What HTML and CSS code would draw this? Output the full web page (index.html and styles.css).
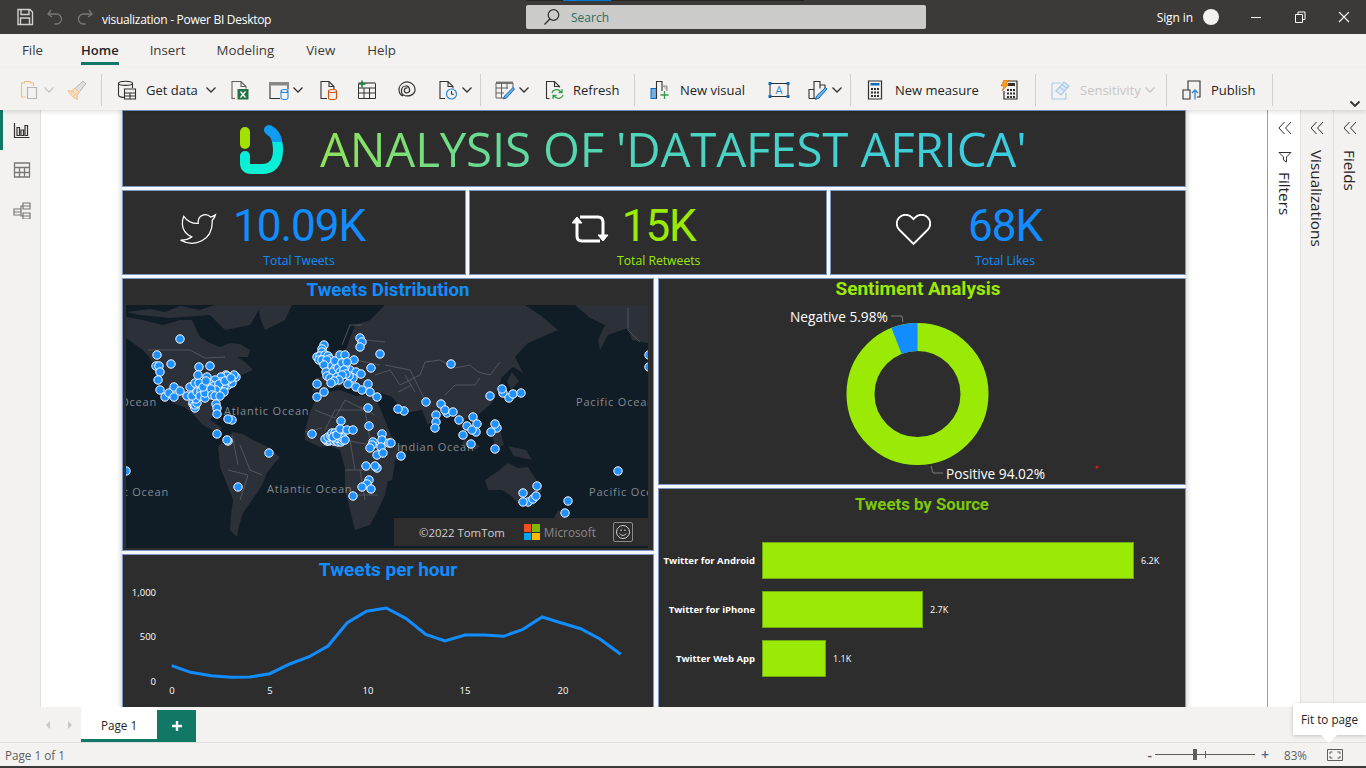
FILE: index.html
```html
<!DOCTYPE html>
<html lang="en">
<head>
    <meta charset="UTF-8">
    <meta name="viewport" content="width=device-width, initial-scale=1.0">
    <title>visualization - Power BI Desktop</title>
    <link rel="stylesheet" href="styles.css">
</head>
<body>
    <!-- Title bar -->
    <header class="titlebar">
        <div class="quick-access">
            <svg class="qa-icon" viewBox="0 0 18 18"><path d="M2 1.500h12l2.500 2.500v12.500h-14.500z M5 1.500v5h8v-5 M4.500 16.500v-6.500h9v6.500" fill="none" stroke="#d2d0ce" stroke-width="1.400"/></svg>
            <svg class="qa-icon" viewBox="0 0 18 18"><path d="M5 2 2 6l4 3 M2.500 6h8a5 5 0 0 1 0 10h-2" fill="none" stroke="#797775" stroke-width="1.300"/></svg>
            <svg class="qa-icon" viewBox="0 0 18 18"><path d="M13 2l3 4-4 3 M15.500 6h-8a5 5 0 0 0 0 10h2" fill="none" stroke="#797775" stroke-width="1.300"/></svg>
        </div>
        <span class="doc-title">visualization - Power BI Desktop</span>
        <div class="search-progress"><span></span></div>
        <div class="search-box">
            <svg class="search-icon" viewBox="0 0 18 18"><circle cx="10.500" cy="7" r="5.300" fill="none" stroke="#323130" stroke-width="1.200"/><path d="M6.800 11 1.500 16.500" stroke="#323130" stroke-width="1.300"/></svg>
            <span>Search</span>
        </div>
        <div class="window-right">
            <span class="sign-in">Sign in</span>
            <span class="avatar"></span>
            <svg class="win-btn" viewBox="0 0 44 16"><path d="M17 8.500h10" stroke="#fff"/></svg>
            <svg class="win-btn" viewBox="0 0 44 16"><path d="M17.500 5.500h7v8h-7z M20 5.500v-2.500h7v7.500h-2.500" fill="none" stroke="#fff"/></svg>
            <svg class="win-btn" viewBox="0 0 44 16"><path d="M17 3l10 10 M27 3 17 13" stroke="#fff" stroke-width="1.100"/></svg>
        </div>
    </header>

    <!-- Menu tabs -->
    <nav class="menu-tabs">
        <span class="menu-tab first">File</span>
        <span class="menu-tab active">Home</span>
        <span class="menu-tab">Insert</span>
        <span class="menu-tab">Modeling</span>
        <span class="menu-tab view-tab">View</span>
        <span class="menu-tab">Help</span>
    </nav>

    <!-- Ribbon -->
    <div class="ribbon">
        <div class="rb-item">
            <svg class="rb-icon" viewBox="0 0 20 20"><path d="M5.500 17h-4v-14h3v-1.500h6v1.500h3v3" fill="none" stroke="#f0bf8e" stroke-width="1.200"/><path d="M7.500 7.500h9v11h-9z" fill="none" stroke="#b8b6b4" stroke-width="1.200"/></svg>
            <svg class="chev dim" viewBox="0 0 12 8"><path d="M1.500 1.500 6 6l4.500-4.500"/></svg>
        </div>
        <div class="rb-item">
            <svg class="rb-icon" viewBox="0 0 20 20"><path d="M1 10.500c3 1 5 0 7-2.500l4.500 4.500c-2 2-3 4.500-2 7-3-.5-7.500-4.500-9.500-9z M4 13l3-1.500 M6.500 16l3-2.500" fill="#f8dcc0" stroke="#f0bf8e"/><path d="M8.500 8 13 4l3-3 3 3-3 3-3 4.500" fill="#e1dfdd" stroke="#b8b6b4"/></svg>
        </div>
        <div class="rb-sep"></div>
        <div class="rb-item">
            <svg class="rb-icon" viewBox="0 0 20 20"><path d="M8 17.500c-3.500 0-6.500-.800-6.500-2.500v-11.500c0-3 14-3 14 0v4.500 M1.500 3.500c0 2.500 14 2.500 14 0" fill="none" stroke="#323130" stroke-width="1.100"/><path d="M7.500 9h11v10h-11z M7.500 13h11 M7.500 16h11 M13 13v6" fill="#f3f2f1" stroke="#323130" stroke-width="1.100"/></svg>
            <span class="rb-label label-getdata">Get data</span>
            <svg class="chev" viewBox="0 0 12 8"><path d="M1.500 1.500 6 6l4.500-4.500"/></svg>
        </div>
        <div class="rb-item">
            <svg class="rb-icon" viewBox="0 0 20 20"><path d="M5 18.500h-3v-17h9l5 5v2 M11 1.500v5h5" fill="none" stroke="#605e5c" stroke-width="1.100"/><rect x="7.500" y="9" width="11" height="10.500" fill="#217346"/><path d="M10.500 11.500l5 6 M15.500 11.500l-5 6" stroke="#fff" stroke-width="1.300"/></svg>
        </div>
        <div class="rb-item">
            <svg class="rb-icon" viewBox="0 0 20 20"><path d="M11 18.500h-10v-16h18v7" fill="none" stroke="#323130" stroke-width="1.100"/><rect x="1" y="2" width="18" height="3.500" fill="#8a8886"/><path d="M12 11c0-2 7-2 7 0v7c0 2-7 2-7 0z M12 11c0 2 7 2 7 0" fill="#f3f2f1" stroke="#2b88d8" stroke-width="1.100"/></svg>
            <svg class="chev" viewBox="0 0 12 8"><path d="M1.500 1.500 6 6l4.500-4.500"/></svg>
        </div>
        <div class="rb-item">
            <svg class="rb-icon" viewBox="0 0 20 20"><path d="M8 18.500h-6v-17h8l5 5v3 M10 1.500v5h5" fill="none" stroke="#323130" stroke-width="1.100"/><path d="M9.500 11c0-2 8-2 8 0v7c0 2-8 2-8 0z M9.500 11c0 2 8 2 8 0" fill="#f3f2f1" stroke="#ca5010" stroke-width="1.100"/></svg>
        </div>
        <div class="rb-item">
            <svg class="rb-icon" viewBox="0 0 20 20"><path d="M1.500 3.500h17v15h-17z M1.500 8h17 M1.500 13h17 M7 8v10.500 M12.500 8v10.500" fill="none" stroke="#323130" stroke-width="1"/><rect x="1.500" y="2" width="17" height="2" fill="#8a8886"/><path d="M5 0.500v7 M1.500 4h7" stroke="#107c41" stroke-width="1.500"/></svg>
        </div>
        <div class="rb-item">
            <svg class="rb-icon" viewBox="0 0 20 20"><path d="M10.500 8a2.500 2.500 0 1 0 .5 4.500c3-1 1.500-7-2.500-6.500-5 .5-5.500 8-1 9.500 5 1.500 11-1 10.500-6.500-.5-6-7-8-11-6.500-3.500 1.500-5 5-5 7 0 3 1.500 5.500 4 6.500" fill="none" stroke="#323130" stroke-width="1.200"/></svg>
        </div>
        <div class="rb-item">
            <svg class="rb-icon" viewBox="0 0 20 20"><path d="M7 18.500h-5v-17h8l5 5v2 M10 1.500v5h5" fill="none" stroke="#323130" stroke-width="1.100"/><circle cx="13.500" cy="14" r="5" fill="#f3f2f1" stroke="#2b88d8" stroke-width="1.200"/><path d="M13.500 11v3.200h2.500" fill="none" stroke="#323130"/></svg>
            <svg class="chev" viewBox="0 0 12 8"><path d="M1.500 1.500 6 6l4.500-4.500"/></svg>
        </div>
        <div class="rb-sep"></div>
        <div class="rb-item">
            <svg class="rb-icon" viewBox="0 0 20 20"><rect x="1" y="1.500" width="17" height="2.500" fill="#8a8886"/><path d="M1 3h17v5 M1 3v15h8 M1 8h12 M1 13h8 M6.500 3v15 M12 3v6" fill="none" stroke="#605e5c"/><path d="M18 7.500l1.500 1.500-8 9-3 1 1-3z" fill="#71afe5" stroke="#0f6cbd"/></svg>
            <svg class="chev" viewBox="0 0 12 8"><path d="M1.500 1.500 6 6l4.500-4.500"/></svg>
        </div>
        <div class="rb-item">
            <svg class="rb-icon" viewBox="0 0 20 20"><path d="M4.500 18.500h-3v-17h8l5 5v1 M9.500 1.500v5h5" fill="none" stroke="#323130" stroke-width="1.100"/><path d="M7 13c.5-3 5-4.500 8-2l1.500 1 M17 9v3.500h-3.500 M18 15c-.5 3-5 4.500-8 2l-1.500-1 M8 19v-3.500h3.500" fill="none" stroke="#3a9a4c" stroke-width="1.300"/></svg>
            <span class="rb-label">Refresh</span>
        </div>
        <div class="rb-sep"></div>
        <div class="rb-item">
            <svg class="rb-icon" viewBox="0 0 20 20"><rect x="1" y="8.500" width="5.500" height="10" fill="#71afe5" stroke="#0f6cbd"/><path d="M6.500 18.500v-17h5.500v9.500" fill="none" stroke="#323130" stroke-width="1.100"/><path d="M12 6h5v5" fill="#c8c6c4" stroke="#8a8886"/><path d="M14.500 11v8 M10.500 15h8" stroke="#3a9a4c" stroke-width="1.300"/></svg>
            <span class="rb-label label-visual">New visual</span>
        </div>
        <div class="rb-item">
            <svg class="rb-icon wide" viewBox="0 0 22 20"><path d="M2 3.500h18v13h-18z" fill="none" stroke="#323130"/><path d="M0.500 2h3v3h-3z M18.500 2h3v3h-3z M0.500 15h3v3h-3z M18.500 15h3v3h-3z" fill="#0f6cbd"/><text class="textbox-a" x="11" y="14">A</text></svg>
        </div>
        <div class="rb-item">
            <svg class="rb-icon" viewBox="0 0 20 20"><path d="M1 18.500v-9h5v-8h6v7 M1 18.500h5v-9 M6 18.500h3 M12 5h5v3" fill="none" stroke="#323130" stroke-width="1.100"/><path d="M17.500 7.500l1.500 1.500-8 9-3.500 1.500 1-3.500z" fill="#71afe5" stroke="#0f6cbd"/></svg>
            <svg class="chev" viewBox="0 0 12 8"><path d="M1.500 1.500 6 6l4.500-4.500"/></svg>
        </div>
        <div class="rb-sep"></div>
        <div class="rb-item">
            <svg class="rb-icon" viewBox="0 0 20 20"><path d="M3.500 1h13v18h-13z" fill="none" stroke="#323130" stroke-width="1.200"/><rect x="5.500" y="3" width="9" height="2.500" fill="#0f6cbd"/><path d="M6 8h2v2h-2z M9 8h2v2h-2z M12 8h2v2h-2z M6 11.500h2v2h-2z M9 11.500h2v2h-2z M12 11.500h2v2h-2z M6 15h2v2h-2z M9 15h2v2h-2z M12 15h2v2h-2z" fill="#323130"/></svg>
            <span class="rb-label label-measure">New measure</span>
        </div>
        <div class="rb-item">
            <svg class="rb-icon" viewBox="0 0 20 20"><path d="M6 1h12v18h-13v-8" fill="none" stroke="#323130" stroke-width="1.200"/><path d="M8 9h2v2h-2z M11 9h2v2h-2z M14 9h2v2h-2z M8 12.500h2v2h-2z M11 12.500h2v2h-2z M14 12.500h2v2h-2z M8 16h2v2h-2z M11 16h2v2h-2z M14 16h2v2h-2z M9 3h7v3h-7z" fill="#323130"/><path d="M5 0h5l-3 4h3l-7 7 2-5h-3z" fill="#f7a11a" stroke="#ca5010" stroke-width=".5"/></svg>
        </div>
        <div class="rb-sep"></div>
        <div class="rb-item">
            <svg class="rb-icon" viewBox="0 0 20 20"><path d="M1 3h9 M1 3v16h14v-6" fill="none" stroke="#a9cbe6" stroke-width="1.200"/><path d="M5 11l8-9 5 4-8 9z M8.500 7l5 4 M11 4.500l5 4" fill="#deecf9" stroke="#a9cbe6" stroke-width="1.200"/></svg>
            <span class="rb-label disabled label-sens">Sensitivity</span>
            <svg class="chev dim" viewBox="0 0 12 8"><path d="M1.500 1.500 6 6l4.500-4.500"/></svg>
        </div>
        <div class="rb-sep"></div>
        <div class="rb-item">
            <svg class="rb-icon" viewBox="0 0 20 20"><path d="M1 10h7v9h-7z M6 10v-9h12v16h-3" fill="none" stroke="#323130" stroke-width="1.100"/><path d="M13 19.500v-9 M10 13l3-3 3 3" fill="none" stroke="#2b88d8" stroke-width="1.300"/></svg>
            <span class="rb-label label-publish">Publish</span>
        </div>
        <div class="rb-sep"></div>
        <svg class="ribbon-collapse" viewBox="0 0 12 8"><path d="M1.500 1.500 6 6l4.500-4.500"/></svg>
    </div>

    <div class="workspace">
        <!-- View switcher -->
        <aside class="view-rail">
            <div class="view-btn active">
                <svg viewBox="0 0 18 18"><path d="M1.500 2v14.500h15" fill="none" stroke="#323130" stroke-width="1.200"/><path d="M4 6.500h2.500v8h-2.500z M8 9h2.500v5.500h-2.500z M12 4.500h2.500v10h-2.500z" fill="none" stroke="#323130" stroke-width="1.200"/></svg>
            </div>
            <div class="view-btn">
                <svg viewBox="0 0 18 18"><path d="M1.500 2h15v14h-15z M1.500 6.500h15 M1.500 11.500h15 M6.500 6.500v9.500 M11.500 6.500v9.500" fill="none" stroke="#797775" stroke-width="1.300"/></svg>
            </div>
            <div class="view-btn">
                <svg viewBox="0 0 18 18"><path d="M1 8h7v6h-7z M1 11h7 M10 2h7v6h-7z M10 5h7 M10 12h7v6h-7z M10 15h7 M8 9.500V5h2 M8 12.500V15h2" fill="none" stroke="#797775" stroke-width="1.200"/></svg>
            </div>
        </aside>

        <!-- Report canvas -->
        <main class="canvas">
            <div class="report">
                <section class="panel banner">
                    <svg class="logo" viewBox="238 121 48 52">
                        <defs>
                            <linearGradient id="logo-grad" x1="0" y1="0" x2="0" y2="1">
                                <stop offset="0.320" stop-color="#0f9bf2"/>
                                <stop offset="0.320" stop-color="#05eadf"/>
                                <stop offset="1" stop-color="#0cf0d4"/>
                            </linearGradient>
                        </defs>
                        <rect x="240" y="125" width="10" height="22" rx="5" fill="#a4e100"/>
                        <path d="M269 128c6 3 9 10 9 20 0 13-6 19-16 19h-11q-6 0-6-6v-7" fill="none" stroke="url(#logo-grad)" stroke-width="10" stroke-linecap="round"/>
                    </svg>
                    <h1 class="banner-title">ANALYSIS OF 'DATAFEST AFRICA'</h1>
                </section>

                <div class="kpi-row">
                    <section class="panel kpi kpi-tweets">
                        <svg class="kpi-icon bird" viewBox="0 0 24 24"><path d="M23 3a10.900 10.900 0 0 1-3 1.480 4.480 4.480 0 0 0-7.860 3v1A10.660 10.660 0 0 1 3 4s-4 9 5 13a11.640 11.640 0 0 1-7 2c9 5 20 0 20-11.500a4.500 4.500 0 0 0-.08-.83A7.720 7.720 0 0 0 23 3z" fill="none" stroke="#fff" stroke-width=".8"/></svg>
                        <div class="kpi-text blue">
                            <div class="kpi-value">10.09K</div>
                            <div class="kpi-label">Total Tweets</div>
                        </div>
                    </section>
                    <section class="panel kpi kpi-retweets">
                        <svg class="kpi-icon swap" viewBox="0 0 38 30"><path d="M6 6v16q0 5 5 5h18 M32 24V8q0-5-5-5H9" fill="none" stroke="#fff" stroke-width="3"/><path d="M1 9l5-6 5 6z M27 21l5 6 5-6z" fill="#fff" stroke="#fff"/></svg>
                        <div class="kpi-text green">
                            <div class="kpi-value">15K</div>
                            <div class="kpi-label">Total Retweets</div>
                        </div>
                    </section>
                    <section class="panel kpi kpi-likes">
                        <svg class="kpi-icon heart" viewBox="1.500 2.500 21 20"><path d="M20.840 4.610a5.500 5.500 0 0 0-7.780 0L12 5.670l-1.060-1.060a5.500 5.500 0 0 0-7.780 7.780l1.060 1.060L12 21.230l7.780-7.780 1.060-1.060a5.500 5.500 0 0 0 0-7.780z" fill="none" stroke="#fff" stroke-width="1.200"/></svg>
                        <div class="kpi-text blue">
                            <div class="kpi-value">68K</div>
                            <div class="kpi-label">Total Likes</div>
                        </div>
                    </section>
                </div>

                <div class="chart-cols">
                    <div class="chart-col">
                        <section class="panel map-panel">
                            <h2 class="chart-title blue map-title">Tweets Distribution</h2>
                            <div class="map">
                                <svg class="map-svg" viewBox="126 305 522 243">
                                    <g class="land">
                                        <path d="M126 338 143 350 150 358 155 370 157 382 160 390 173 403 184 407 192 413 203 425 217 433 222 428 210 420 215 413 217 403 210 400 220 400 233 387 235 378 244 374 253 370 245 362 237 357 248 357 250 350 240 344 230 343 220 347 208 342 200 337 192 320 180 320 163 325 143 320 126 317z"/>
                                        <path d="M126 312 150 309 165 312 180 306 200 310 215 305H262L250 325 225 330 210 315 170 318 140 315z"/>
                                        <path d="M258 305H292L285 320 265 330 260 318z"/>
                                        <path d="M218 447 225 438 233 432 243 434 253 440 268 447 280 457 273 465 267 473 262 485 257 493 250 503 243 513 239 526 237 537 230 530 231 515 233 500 226 482 220 467z"/>
                                        <path d="M305 430 310 412 317 397 328 392 340 390 356 396 373 395 380 408 385 420 395 445 405 445 397 458 390 470 385 495 378 510 370 525 355 530 350 510 345 490 345 468 340 450 330 446 320 447 305 440z"/>
                                        <path d="M385 305H525L540 315 558 330 542 337 528 343 515 357 523 373 513 367 502 377 497 392 492 403 478 415 472 413 465 420 475 433 462 423 452 415 438 412 428 425 422 410 405 413 392 397 373 390 345 385 320 390 312 392 316 378 330 375 325 362 335 350 345 352 350 338 355 325 370 320z"/>
                                        <path d="M485 480 497 472 508 463 518 468 528 467 535 478 542 490 538 500 532 507 518 503 510 495 502 490 488 490z"/>
                                        <path d="M575 305H648V343L632 340 628 328 608 335 600 350 598 340 605 325 590 318z"/>
                                        <path d="M465 438 480 446 476 450 462 444z M492 436 500 430 504 445 496 448z M508 446 526 450 532 460 514 456z M388 468 395 463 392 480 386 482z M507 381 512 372 519 381 511 390z M558 510 566 516 556 526 552 522z M324 350 330 346 328 358 322 358z"/>
                                    </g>
                                    <g class="borders">
                                        <path d="M148 350H190L205 358 225 357 M172 395 190 397 200 410 M342 345 350 325 362 325 M365 340 385 342 M330 378 355 360 380 365 M375 375 390 370 400 385 420 375 425 362 440 360 455 368 470 365 478 372 490 375 500 362 M425 400 410 370 385 365 M445 395 455 385 475 385 480 378 M325 430 335 410 365 410 M365 410 370 440 385 455 M345 440 370 445 M345 470 380 470 M350 495 378 495 M240 445 250 470 262 475 M228 470 248 475 240 500 M232 435 238 465 M628 308V330L640 342 M315 410 335 418 345 400 M345 400 375 415 M305 432 322 428 M350 440 355 470 M360 470 365 500 M405 375 415 392 M398 392 412 385"/>
                                    </g>
                                    <g class="map-labels">
                                        <text x="157" y="406" text-anchor="end">Ocean</text>
                                        <text x="224" y="415">Atlantic Ocean</text>
                                        <text x="169" y="496" text-anchor="end">Pacific Ocean</text>
                                        <text x="267" y="493">Atlantic Ocean</text>
                                        <text x="397" y="451">Indian Ocean</text>
                                        <text x="576" y="406">Pacific Ocean</text>
                                        <text x="589" y="496">Pacific Ocean</text>
                                    </g>
                                    <g class="pins">
                                        <circle cx="180" cy="339"/><circle cx="157" cy="355"/><circle cx="156" cy="366"/><circle cx="159" cy="366"/><circle cx="160" cy="372"/><circle cx="171" cy="364"/><circle cx="158" cy="380"/><circle cx="160" cy="390"/><circle cx="165" cy="397"/><circle cx="169" cy="393"/><circle cx="174" cy="387"/><circle cx="174" cy="397"/><circle cx="180" cy="391"/><circle cx="187" cy="396"/><circle cx="190" cy="387"/><circle cx="195" cy="383"/><circle cx="199" cy="383"/><circle cx="199" cy="367"/><circle cx="198" cy="375"/><circle cx="210" cy="366"/><circle cx="207" cy="377"/>
                                        <circle cx="193" cy="404"/><circle cx="195" cy="408"/><circle cx="193" cy="402"/><circle cx="195" cy="405"/><circle cx="197" cy="403"/><circle cx="196" cy="399"/><circle cx="192" cy="396"/><circle cx="197" cy="392"/><circle cx="201" cy="391"/><circle cx="200" cy="396"/><circle cx="205" cy="398"/><circle cx="208" cy="390"/><circle cx="205" cy="393"/><circle cx="212" cy="394"/><circle cx="222" cy="389"/><circle cx="218" cy="392"/><circle cx="228" cy="385"/><circle cx="224" cy="386"/><circle cx="232" cy="383"/><circle cx="228" cy="380"/><circle cx="236" cy="377"/><circle cx="234" cy="375"/><circle cx="226" cy="375"/><circle cx="227" cy="376"/><circle cx="221" cy="377"/><circle cx="221" cy="382"/><circle cx="215" cy="380"/><circle cx="210" cy="384"/><circle cx="203" cy="387"/><circle cx="206" cy="381"/><circle cx="218" cy="387"/><circle cx="214" cy="386"/><circle cx="219" cy="384"/><circle cx="225" cy="381"/><circle cx="231" cy="378"/><circle cx="216" cy="390"/><circle cx="211" cy="389"/><circle cx="224" cy="392"/><circle cx="212" cy="395"/><circle cx="215" cy="396"/><circle cx="220" cy="396"/><circle cx="216" cy="404"/><circle cx="217" cy="408"/><circle cx="217" cy="414"/><circle cx="232" cy="420"/><circle cx="228" cy="419"/><circle cx="217" cy="434"/><circle cx="228" cy="441"/><circle cx="227" cy="440"/><circle cx="269" cy="453"/><circle cx="238" cy="487"/><circle cx="126" cy="471"/>
                                        <circle cx="324" cy="345"/><circle cx="322" cy="349"/><circle cx="322" cy="352"/><circle cx="317" cy="357"/><circle cx="320" cy="356"/><circle cx="325" cy="355"/><circle cx="319" cy="360"/><circle cx="322" cy="360"/><circle cx="328" cy="356"/><circle cx="330" cy="359"/><circle cx="327" cy="360"/><circle cx="324" cy="365"/><circle cx="332" cy="366"/><circle cx="335" cy="369"/><circle cx="335" cy="361"/><circle cx="340" cy="355"/><circle cx="345" cy="355"/><circle cx="354" cy="360"/><circle cx="360" cy="338"/><circle cx="362" cy="342"/><circle cx="360" cy="347"/><circle cx="380" cy="354"/><circle cx="371" cy="368"/><circle cx="326" cy="372"/><circle cx="350" cy="370"/><circle cx="345" cy="367"/><circle cx="356" cy="372"/><circle cx="361" cy="374"/><circle cx="353" cy="378"/><circle cx="349" cy="376"/><circle cx="333" cy="372"/><circle cx="338" cy="368"/><circle cx="342" cy="363"/><circle cx="347" cy="362"/><circle cx="340" cy="372"/><circle cx="344" cy="370"/><circle cx="346" cy="374"/><circle cx="327" cy="376"/><circle cx="330" cy="378"/><circle cx="337" cy="377"/><circle cx="342" cy="375"/><circle cx="339" cy="380"/><circle cx="334" cy="381"/><circle cx="331" cy="383"/><circle cx="317" cy="384"/><circle cx="324" cy="392"/><circle cx="317" cy="397"/><circle cx="348" cy="384"/><circle cx="356" cy="387"/><circle cx="362" cy="390"/><circle cx="368" cy="384"/><circle cx="370" cy="392"/><circle cx="377" cy="397"/><circle cx="368" cy="408"/><circle cx="369" cy="426"/>
                                        <circle cx="312" cy="434"/><circle cx="341" cy="421"/><circle cx="327" cy="441"/><circle cx="329" cy="441"/><circle cx="325" cy="439"/><circle cx="330" cy="440"/><circle cx="334" cy="441"/><circle cx="336" cy="440"/><circle cx="338" cy="442"/><circle cx="341" cy="442"/><circle cx="328" cy="437"/><circle cx="331" cy="436"/><circle cx="332" cy="433"/><circle cx="335" cy="433"/><circle cx="335" cy="436"/><circle cx="337" cy="438"/><circle cx="339" cy="436"/><circle cx="340" cy="437"/><circle cx="342" cy="440"/><circle cx="343" cy="438"/><circle cx="333" cy="437"/><circle cx="337" cy="435"/><circle cx="345" cy="440"/><circle cx="340" cy="429"/><circle cx="347" cy="430"/><circle cx="353" cy="430"/>
                                        <circle cx="382" cy="434"/><circle cx="382" cy="440"/><circle cx="373" cy="442"/><circle cx="372" cy="445"/><circle cx="370" cy="448"/><circle cx="381" cy="447"/><circle cx="377" cy="455"/><circle cx="383" cy="453"/><circle cx="389" cy="443"/><circle cx="366" cy="466"/><circle cx="377" cy="468"/><circle cx="375" cy="466"/><circle cx="369" cy="480"/><circle cx="367" cy="484"/><circle cx="362" cy="487"/><circle cx="371" cy="489"/><circle cx="353" cy="496"/>
                                        <circle cx="451" cy="364"/><circle cx="490" cy="396"/><circle cx="503" cy="393"/><circle cx="502" cy="389"/><circle cx="509" cy="398"/><circle cx="513" cy="394"/><circle cx="521" cy="393"/><circle cx="426" cy="402"/><circle cx="404" cy="411"/><circle cx="398" cy="409"/><circle cx="441" cy="404"/><circle cx="447" cy="413"/><circle cx="445" cy="410"/><circle cx="453" cy="412"/><circle cx="436" cy="415"/><circle cx="436" cy="422"/><circle cx="435" cy="428"/><circle cx="459" cy="420"/><circle cx="467" cy="426"/><circle cx="473" cy="417"/><circle cx="477" cy="424"/><circle cx="476" cy="432"/><circle cx="472" cy="430"/><circle cx="463" cy="435"/><circle cx="471" cy="444"/><circle cx="497" cy="428"/><circle cx="495" cy="424"/><circle cx="491" cy="432"/><circle cx="495" cy="449"/><circle cx="391" cy="443"/><circle cx="401" cy="456"/><circle cx="618" cy="471"/><circle cx="537" cy="486"/><circle cx="523" cy="493"/><circle cx="528" cy="502"/><circle cx="523" cy="502"/><circle cx="533" cy="499"/><circle cx="536" cy="496"/><circle cx="568" cy="501"/><circle cx="565" cy="513"/><circle cx="649" cy="355"/><circle cx="649" cy="367"/>
                                    </g>
                                </svg>
                                <div class="map-credit">
                                    <span class="tomtom">©2022 TomTom</span>
                                    <span class="ms-logo"><i class="ms-r"></i><i class="ms-g"></i><i class="ms-b"></i><i class="ms-y"></i></span>
                                    <span class="ms-name">Microsoft</span>
                                    <span class="smiley">
                                        <svg viewBox="0 0 16 16"><circle cx="8" cy="8" r="6.500" fill="none" stroke="#d0d0d0"/><path d="M4.800 9.500c1.500 2.500 5 2.500 6.400 0" fill="none" stroke="#d0d0d0"/><path d="M5.500 5.500h1.200v1.500h-1.200z M9.300 5.500h1.200v1.500h-1.200z" fill="#d0d0d0"/></svg>
                                    </span>
                                </div>
                            </div>
                        </section>
                        <section class="panel hour-panel">
                            <h2 class="chart-title blue tall">Tweets per hour</h2>
                            <svg class="hour-svg" viewBox="123 585 531 122">
                                <g class="axis-text">
                                    <text x="156" y="596" text-anchor="end">1,000</text>
                                    <text x="156" y="640" text-anchor="end">500</text>
                                    <text x="156" y="685" text-anchor="end">0</text>
                                    <text x="172" y="694" text-anchor="middle">0</text>
                                    <text x="270" y="694" text-anchor="middle">5</text>
                                    <text x="368" y="694" text-anchor="middle">10</text>
                                    <text x="465" y="694" text-anchor="middle">15</text>
                                    <text x="563" y="694" text-anchor="middle">20</text>
                                </g>
                                <polyline class="hour-line" points="171.700,665.700 190.600,672.300 211.300,675.700 230.900,677.300 250.200,677 269.800,673.700 289.800,664 308.700,657 328,646 347.300,622.700 366.600,611.300 386.200,608 405.800,618.300 425.800,634.300 445,641 465,635 484.300,635 503.600,636.300 522.900,629.300 542.200,617 561.500,623 580.700,628.700 600,639 620.700,654.300"/>
                            </svg>
                        </section>
                    </div>
                    <div class="chart-col">
                        <section class="panel sentiment-panel">
                            <h2 class="chart-title green sentiment-title">Sentiment Analysis</h2>
                            <svg class="donut-svg" viewBox="659 299 526 185">
                                <circle class="donut-base" cx="917.500" cy="394" r="57"/>
                                <circle class="donut-neg" cx="917.500" cy="394" r="57" pathLength="100" transform="rotate(-111.500 917.500 394)"/>
                                <path class="leader" d="M891 316h11l1 6 M931 466l2 7h10"/>
                                <text class="donut-label" x="790" y="322">Negative 5.98%</text>
                                <text class="donut-label" x="946" y="479">Positive 94.02%</text>
                                <circle cx="1097" cy="467" r="1.500" fill="#e81123"/>
                            </svg>
                        </section>
                        <section class="panel source-panel">
                            <h2 class="chart-title lime source-title">Tweets by Source</h2>
                            <div class="bars">
                                <div class="bar-row"><span class="bar-name">Twitter for Android</span><span class="bar" style="width:372px"></span><span class="bar-val">6.2K</span></div>
                                <div class="bar-row"><span class="bar-name">Twitter for iPhone</span><span class="bar" style="width:161px"></span><span class="bar-val">2.7K</span></div>
                                <div class="bar-row"><span class="bar-name">Twitter Web App</span><span class="bar" style="width:64px"></span><span class="bar-val">1.1K</span></div>
                            </div>
                        </section>
                    </div>
                </div>
            </div>
        </main>

        <!-- Collapsed panes -->
        <aside class="pane pane-filters">
            <svg class="pane-chev" viewBox="0 0 14 14"><path d="M6.500 1 1 7l5.500 6 M13 1 7.500 7l5.500 6"/></svg>
            <svg class="filter-icon" viewBox="0 0 14 14"><path d="M1 1.500h12l-4.500 4.500v5l-3-2v-3z" fill="none" stroke="#323130"/></svg>
            <span class="pane-name">Filters</span>
        </aside>
        <aside class="pane">
            <svg class="pane-chev" viewBox="0 0 14 14"><path d="M6.500 1 1 7l5.500 6 M13 1 7.500 7l5.500 6"/></svg>
            <span class="pane-name spaced">Visualizations</span>
        </aside>
        <aside class="pane">
            <svg class="pane-chev" viewBox="0 0 14 14"><path d="M6.500 1 1 7l5.500 6 M13 1 7.500 7l5.500 6"/></svg>
            <span class="pane-name spaced">Fields</span>
        </aside>
    </div>

    <!-- Page tabs -->
    <div class="page-bar">
        <div class="page-nav">
            <svg viewBox="0 0 6 10"><path d="M5 1 1 5l4 4z"/></svg>
            <svg viewBox="0 0 6 10"><path d="M1 1l4 4-4 4z"/></svg>
        </div>
        <div class="page-tab">Page 1</div>
        <div class="page-add">
            <svg viewBox="0 0 12 12"><path d="M6 1v10 M1 6h10" stroke="#fff" stroke-width="2.400"/></svg>
        </div>
    </div>

    <footer class="status-bar">
        <span class="page-count">Page 1 of 1</span>
        <div class="zoom-tools">
            <span class="zoom-sign">-</span>
            <div class="zoom-track"><span class="zoom-tick"></span><span class="zoom-thumb"></span></div>
            <span class="zoom-sign plus">+</span>
            <span class="zoom-pct">83%</span>
            <svg class="fit-icon" viewBox="0 0 16 12"><path d="M.5.500h15v11h-15z" fill="none" stroke="#605e5c"/><path d="M3 5V3h2.500 M10.500 3H13v2 M3 7v2h2.500 M10.500 9H13V7" fill="none" stroke="#605e5c"/></svg>
        </div>
    </footer>
    <div class="bottom-edge"></div>

    <div class="tooltip">Fit to page</div>
</body>
</html>
```
FILE: styles.css
```css
* {
    box-sizing: border-box;
}
html, body {
    margin: 0;
    height: 768px;
    overflow: hidden;
}
body {
    position: relative;
    display: flex;
    flex-direction: column;
    font-family: "Open Sans", "Noto Sans", sans-serif;
    color: #252423;
    background-color: #f3f2f1;
}
h1, h2 {
    margin: 0;
}
svg {
    display: block;
    flex: none;
}

/* Title bar */
.titlebar {
    height: 34px;
    flex: none;
    display: flex;
    align-items: center;
    position: relative;
    background-color: #3b3a39;
    color: #fff;
}
.quick-access {
    display: flex;
    gap: 12px;
    margin-left: 16px;
}
.qa-icon {
    width: 18px;
    height: 18px;
}
.doc-title {
    margin-left: 8px;
    margin-top: 5px;
    font-size: 12px;
    letter-spacing: -0.280px;
}
.search-progress {
    position: absolute;
    left: 526px;
    top: 0;
    width: 278px;
    height: 1px;
    background-color: #252423;
}
.search-progress span {
    display: block;
    width: 48px;
    height: 1px;
    margin-left: 37px;
    background-color: #0078d4;
}
.search-box {
    position: absolute;
    left: 526px;
    top: 5px;
    width: 400px;
    height: 24px;
    display: flex;
    align-items: center;
    padding-left: 17px;
    gap: 10px;
    border-radius: 2px;
    background-color: #cbcbc9;
    color: #2f6a5f;
    font-size: 12px;
}
.search-icon {
    width: 18px;
    height: 18px;
}
.window-right {
    margin-left: auto;
    display: flex;
    align-items: center;
}
.sign-in {
    font-size: 12px;
    margin-right: 10px;
    letter-spacing: -0.100px;
}
.avatar {
    width: 16px;
    height: 16px;
    border-radius: 50%;
    background-color: #f3f2f1;
    margin-right: 15px;
}
.win-btn {
    width: 44px;
    height: 16px;
}

/* Menu tabs */
.menu-tabs {
    height: 34px;
    flex: none;
    display: flex;
    padding-left: 22px;
    gap: 31px;
}
.menu-tab {
    height: 31px;
    padding-top: 6px;
    font-size: 13.300px;
    line-height: 20px;
    color: #3b3a39;
}
.menu-tab.first {
    margin-right: 7px;
}
.menu-tab.view-tab {
    margin-left: 1px;
    margin-right: 1px;
}
.menu-tab.active {
    font-weight: 600;
    font-size: 13px;
    color: #252423;
    border-bottom: 3px solid #117865;
}

/* Ribbon */
.ribbon {
    height: 42px;
    flex: none;
    position: relative;
    z-index: 2;
    display: grid;
    grid-template-columns: 47px 34px 16px 113px 39px 50px 38px 40px 41px 42px 15px 50px 89px 16px 118px 40px 42px 15px 134px 36px 16px 115px 16px 90px 1px;
    align-items: center;
    padding: 2px 0 0 20px;
    box-shadow: 0 2px 4px rgba(0, 0, 0, 0.12);
    background-color: #f3f2f1;
}
.rb-item {
    display: flex;
    align-items: center;
    font-size: 13px;
}
.rb-icon {
    width: 20px;
    height: 20px;
}
.rb-icon.wide {
    width: 22px;
}
.rb-sep {
    width: 1px;
    height: 32px;
    background-color: #d2d0ce;
}
.rb-label {
    white-space: nowrap;
    color: #252423;
    margin-left: 8px;
}
.rb-label.label-getdata {
    margin-left: 9px;
}
.label-visual {
    margin-left: 10px;
}
.label-measure {
    margin-left: 10px;
}
.label-publish {
    margin-left: 9px;
}
.rb-label.disabled {
    color: #c8c6c4;
    margin-left: 9px;
}
.chev {
    width: 12px;
    height: 8px;
    margin-left: 3px;
    fill: none;
    stroke: #323130;
    stroke-width: 1.300;
}
.label-getdata + .chev {
    margin-left: 7px;
}
.chev.dim {
    stroke: #c8c6c4;
}
.textbox-a {
    font-size: 11px;
    fill: #2b88d8;
    text-anchor: middle;
}
.ribbon-collapse {
    position: absolute;
    right: 5px;
    bottom: 2px;
    width: 12px;
    height: 8px;
    fill: none;
    stroke: #323130;
    stroke-width: 1.800;
}

/* Workspace */
.workspace {
    height: 597px;
    flex: none;
    display: flex;
}
.view-rail {
    width: 41px;
    flex: none;
    border-right: 1px solid #e1dfdd;
}
.view-btn {
    height: 40px;
    display: flex;
    align-items: center;
    justify-content: center;
    border-left: 3px solid transparent;
}
.view-btn.active {
    border-left-color: #117865;
}
.view-btn svg {
    width: 18px;
    height: 18px;
}
.canvas {
    flex: 1;
    overflow: hidden;
    padding-left: 81px;
    background-color: #fff;
    border-right: 1px solid #a19f9d;
}
.pane {
    width: 33px;
    flex: none;
    display: flex;
    flex-direction: column;
    align-items: center;
    padding-top: 11px;
    border-left: 1px solid #e1dfdd;
}
.pane-filters {
    width: 32px;
    padding-left: 2px;
    border-left: none;
    background-color: #fff;
}
.pane-chev {
    width: 14px;
    height: 14px;
    fill: none;
    stroke: #323130;
}
.filter-icon {
    width: 14px;
    height: 14px;
    margin-top: 16px;
}
.pane-name {
    margin-top: 7px;
    writing-mode: vertical-rl;
    font-size: 15.300px;
    line-height: 18px;
    color: #252423;
}
.pane-name.spaced {
    margin-top: 15px;
}

/* Report */
.report {
    width: 1064px;
    height: 612px;
    display: flex;
    flex-direction: column;
    gap: 3px;
    background-color: #f5f8fd;
    box-shadow: 0 0 6px rgba(0, 0, 0, 0.25);
}
.panel {
    background-color: #2d2d2d;
    border: 1px solid #7f96c2;
    color: #fff;
}
.banner {
    height: 77px;
    flex: none;
    display: flex;
    align-items: center;
}
.logo {
    width: 48px;
    height: 52px;
    margin-left: 115px;
}
.banner-title {
    margin-left: 34px;
    font-size: 47.500px;
    font-weight: 400;
    line-height: 60px;
    letter-spacing: -0.220px;
    white-space: nowrap;
    background-image: linear-gradient(90deg, #8fe35a, #55d6ae 35%, #48d3c8 60%, #3bcbe2);
    -webkit-background-clip: text;
    background-clip: text;
    color: transparent;
}

/* KPI cards */
.kpi-row {
    height: 85px;
    flex: none;
    display: flex;
    gap: 3px;
}
.kpi {
    display: flex;
    align-items: flex-start;
}
.kpi-tweets {
    width: 344px;
    padding-left: 56px;
}
.kpi-retweets {
    width: 358px;
    padding-left: 101px;
}
.kpi-likes {
    width: 356px;
    padding-left: 65px;
}
.kpi-icon.bird {
    width: 38px;
    height: 38px;
    margin-top: 19px;
}
.kpi-icon.swap {
    width: 38px;
    height: 30px;
    margin-top: 23px;
}
.kpi-icon.heart {
    width: 35px;
    height: 32px;
    margin-top: 23px;
}
.kpi-text {
    display: flex;
    flex-direction: column;
    align-items: center;
}
.kpi-tweets .kpi-text {
    margin-left: 16px;
}
.kpi-retweets .kpi-text {
    margin-left: 8px;
}
.kpi-likes .kpi-text {
    margin-left: 37px;
}
.kpi-value {
    margin-top: 9px;
    font-family: Roboto, sans-serif;
    font-size: 44px;
    line-height: 52px;
    letter-spacing: -1px;
}
.kpi-label {
    margin-top: 1px;
    font-size: 12.200px;
    line-height: 16px;
}
.blue {
    color: #118dff;
}
.green {
    color: #9bea06;
}
.lime {
    color: #7cc80e;
}

/* Charts */
.chart-cols {
    flex: 1;
    display: flex;
    gap: 4px;
}
.chart-col {
    width: 532px;
    display: flex;
    flex-direction: column;
    gap: 3px;
}
.chart-col + .chart-col {
    width: 528px;
}
.chart-title {
    font-family: Roboto, sans-serif;
    font-size: 19px;
    font-weight: 700;
    line-height: 20px;
    text-align: center;
}
.chart-title.map-title {
    height: 20px;
    padding-top: 1px;
    font-size: 18.600px;
}
.chart-title.tall {
    line-height: 30px;
}
.chart-title.sentiment-title {
    padding-right: 8px;
}
.chart-title.source-title {
    height: 28px;
    padding-top: 1px;
    font-size: 16.800px;
    line-height: 28px;
}
.map-panel {
    height: 273px;
    flex: none;
}
.hour-panel {
    flex: 1;
}
.sentiment-panel {
    height: 207px;
    flex: none;
}
.source-panel {
    flex: 1;
}

/* Map */
.map {
    position: relative;
    width: 522px;
    height: 243px;
    margin: 6px 0 0 3px;
    overflow: hidden;
    background-color: #101c26;
}
.map-svg {
    width: 522px;
    height: 243px;
}
.land {
    fill: #2c3038;
}
.borders {
    fill: none;
    stroke: #565a60;
    stroke-width: 0.900;
}
.map-labels {
    font-size: 11px;
    letter-spacing: 0.800px;
    fill: #858a8e;
}
.pins circle {
    r: 4.200px;
    fill: #1e90ff;
    stroke: #fff;
    stroke-width: 1;
}
.map-credit {
    position: absolute;
    right: 0;
    bottom: 2px;
    width: 254px;
    height: 28px;
    display: flex;
    align-items: center;
    padding-left: 25px;
    background-color: #2d2d2d;
    font-size: 11.400px;
}
.tomtom {
    color: #d0d0d0;
    white-space: nowrap;
}
.ms-logo {
    width: 16px;
    height: 16px;
    margin-left: 19px;
    display: grid;
    grid-template-columns: 1fr 1fr;
    gap: 1px;
}
.ms-logo i {
    display: block;
}
.ms-r {
    background-color: #f25022;
}
.ms-g {
    background-color: #7fba00;
}
.ms-b {
    background-color: #00a4ef;
}
.ms-y {
    background-color: #ffb900;
}
.ms-name {
    margin-left: 4px;
    color: #8a8a8a;
    font-size: 11.800px;
}
.smiley {
    width: 20px;
    height: 20px;
    margin-left: 17px;
    padding: 1px;
    border: 1px solid #8a8a8a;
    border-radius: 2px;
}

/* Line chart */
.hour-svg {
    width: 531px;
    height: 122px;
}
.axis-text {
    font-size: 9.500px;
    fill: #fff;
}
.hour-line {
    fill: none;
    stroke: #118dff;
    stroke-width: 3;
}

/* Donut chart */
.donut-svg {
    width: 526px;
    height: 185px;
}
.donut-base {
    fill: none;
    stroke: #9bea06;
    stroke-width: 28;
}
.donut-neg {
    fill: none;
    stroke: #118dff;
    stroke-width: 28;
    stroke-dasharray: 5.980 94.020;
}
.leader {
    fill: none;
    stroke: #7a7a7a;
}
.donut-label {
    font-size: 13.700px;
    fill: #fff;
}

/* Bar chart */
.bars {
    margin-top: 25px;
    display: flex;
    flex-direction: column;
    gap: 12px;
}
.bar-row {
    height: 37px;
    display: flex;
    align-items: center;
}
.bar-name {
    width: 96px;
    flex: none;
    text-align: right;
    font-size: 9.500px;
    font-weight: 700;
    white-space: nowrap;
}
.bar {
    height: 37px;
    margin-left: 7px;
    background-color: #9bea06;
    border: 1px solid #6fa80f;
}
.bar-val {
    margin-left: 7px;
    font-size: 9px;
}

/* Page tabs */
.page-bar {
    height: 36px;
    flex: none;
    position: relative;
    display: flex;
    padding-left: 45px;
    background-color: #f3f2f1;
    border-bottom: 1px solid #e1dfdd;
}
.page-nav {
    width: 36px;
    display: flex;
    align-items: center;
    gap: 16px;
    fill: #c8c6c4;
}
.page-nav svg {
    width: 6px;
    height: 10px;
}
.page-tab {
    width: 76px;
    padding-top: 9px;
    text-align: center;
    font-size: 11.700px;
    line-height: 18px;
    background-color: #fff;
    border-bottom: 3px solid #117865;
}
.page-add {
    width: 39px;
    height: 32px;
    margin-top: 3px;
    display: flex;
    align-items: center;
    justify-content: center;
    background-color: #117865;
}
.page-add svg {
    width: 12px;
    height: 12px;
}

/* Status bar */
.status-bar {
    height: 23px;
    flex: none;
    display: flex;
    align-items: center;
    padding-left: 5px;
    font-size: 11.700px;
    color: #605e5c;
}
.zoom-tools {
    margin-left: auto;
    display: flex;
    align-items: center;
}
.zoom-sign {
    font-size: 14px;
    line-height: 16px;
    font-weight: 600;
}
.zoom-sign.plus {
    margin-left: 6px;
    color: #4a6a8a;
}
.zoom-track {
    position: relative;
    width: 100px;
    height: 1px;
    margin-left: 3px;
    background-color: #605e5c;
}
.zoom-thumb {
    position: absolute;
    left: 38px;
    top: -5px;
    width: 4px;
    height: 11px;
    background-color: #605e5c;
}
.zoom-tick {
    position: absolute;
    left: 50px;
    top: -3px;
    width: 1px;
    height: 7px;
    background-color: #605e5c;
}
.zoom-pct {
    margin-left: 15px;
}
.fit-icon {
    width: 16px;
    height: 12px;
    margin: 0 23px 0 20px;
}
.bottom-edge {
    height: 2px;
    flex: none;
    background-color: #3b3a39;
}
.tooltip {
    position: absolute;
    left: 1293px;
    top: 703px;
    width: 73px;
    height: 32px;
    padding: 8px 0 0 8px;
    font-size: 11.700px;
    line-height: 16px;
    white-space: nowrap;
    background-color: #fff;
    box-shadow: 0 1px 4px rgba(0, 0, 0, 0.2);
}
.tooltip::after {
    content: "";
    position: absolute;
    left: 28px;
    top: 32px;
    border-left: 8px solid transparent;
    border-right: 8px solid transparent;
    border-top: 8px solid #fff;
}
```
